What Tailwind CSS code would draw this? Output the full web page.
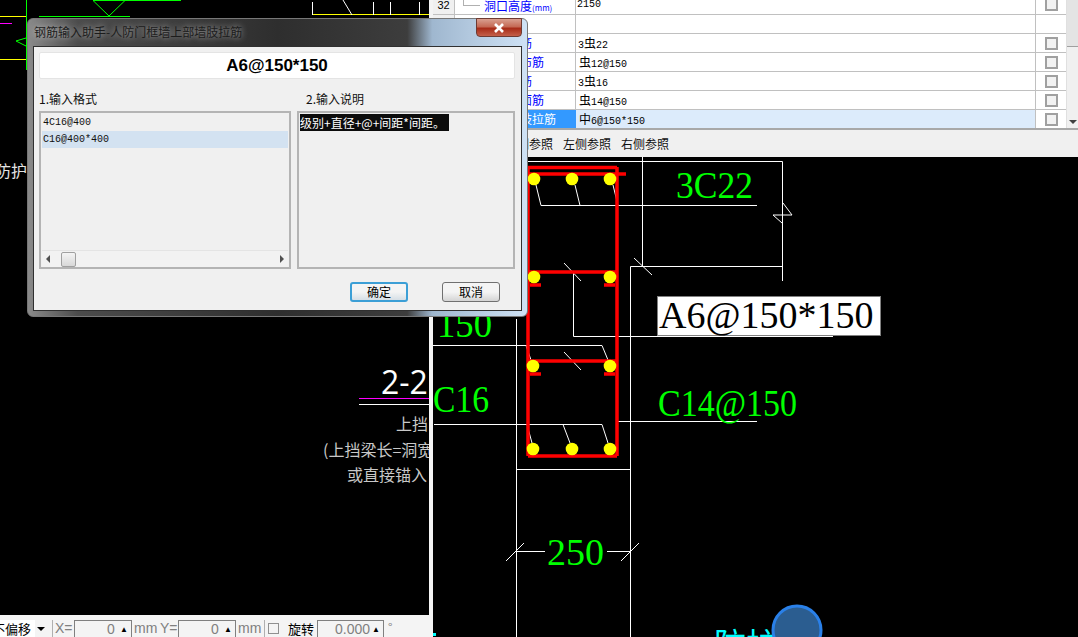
<!DOCTYPE html>
<html lang="zh">
<head>
  <meta charset="UTF-8" />
  <title>钢筋输入助手</title>
  <script src="https://cdn.jsdelivr.net/npm/@tailwindcss/browser@4"></script>
</head>
<body class="bg-black">
<div class="relative w-[1078px] h-[637px] overflow-hidden flex bg-[#f4f4f4] font-['Noto_Sans_CJK_SC','Liberation_Sans',sans-serif]">

  <!-- left drawing + bottom toolbar -->
  <div class="w-[429px] flex flex-col shrink-0">
    <svg class="flex-1 block bg-black" width="429" height="615" viewBox="0 0 429 615" fill="none">
      <g stroke="#00ff00">
        <path d="M93 .5H181M93 .5L109 16L125 .5M39 16.5H130M26.5 0V70M26 38L16 41L26 46" />
      </g>
      <g stroke="#ffff00">
        <path d="M0 16.5H26M0 59.5H26M312 14.5H429" />
      </g>
      <path d="M0 23.5H12" stroke="#ff00ff" />
      <path d="M312.5 2V15M373.5 2V15M390.5 2V15M419.5 2V15M343 0L352 15" stroke="#fff" />
      <path d="M359 398.5H429" stroke="#ff00ff" />
      <path d="M359 404.5H429" stroke="#fff" />
      <text x="-5" y="177" class="fill-[#e4e4e4] text-[16px]">防护</text>
      <text x="381" y="394" class="fill-white text-[32px] font-['Open_Sans']">2-2</text>
      <text x="396" y="430" class="fill-[#c8c8c8] text-[16px]">上挡</text>
      <text x="323" y="456" class="fill-[#c8c8c8] text-[16px]">(上挡梁长=洞宽</text>
      <text x="347" y="481" class="fill-[#c8c8c8] text-[16px]">或直接锚入</text>
    </svg>
    <div class="h-[22px] flex items-start pt-[5px] text-[13px] text-[#808080] bg-[#f4f4f4]">
      <div class="w-[35px] h-[17px] bg-white text-black leading-[17px] overflow-hidden whitespace-nowrap pl-[4px] -indent-[12px]">不偏移</div>
      <span class="ml-[2px] mt-[7px] w-0 h-0 border-x-[4px] border-x-transparent border-t-[4px] border-t-black"></span>
      <span class="ml-[7px] w-px h-[17px] bg-[#b0b0b0]"></span>
      <span class="ml-[2px] w-[19px] leading-[17px] font-['Liberation_Sans'] text-[14px]">X=</span>
      <div class="w-[58px] h-[20px] border border-[#808080] flex justify-between font-['Liberation_Sans'] text-[14px] leading-[17px] pl-[32px] pr-[3px]"><span>0</span><span class="text-black text-[8px]">▲</span></div>
      <span class="ml-[2px] w-[26px] font-['Liberation_Sans'] text-[14px] leading-[17px]">mm</span>
      <span class="w-[18px] font-['Liberation_Sans'] text-[14px] leading-[17px]">Y=</span>
      <div class="w-[58px] h-[20px] border border-[#808080] flex justify-between font-['Liberation_Sans'] text-[14px] leading-[17px] pl-[32px] pr-[3px]"><span>0</span><span class="text-black text-[8px]">▲</span></div>
      <span class="ml-[2px] w-[26px] font-['Liberation_Sans'] text-[14px] leading-[17px]">mm</span>
      <span class="w-px h-[17px] bg-[#b0b0b0]"></span>
      <span class="ml-[3px] mt-[3px] w-[11px] h-[11px] border border-[#909090]"></span>
      <span class="ml-[9px] w-[28px] text-black leading-[17px]">旋转</span>
      <div class="ml-[1px] w-[67px] h-[20px] border border-[#808080] flex justify-between font-['Liberation_Sans'] text-[14px] leading-[17px] pl-[17px] pr-[3px]"><span>0.000</span><span class="text-black text-[8px]">▲</span></div>
      <span class="ml-[4px] text-[12px] leading-[14px]">°</span>
    </div>
  </div>

  <!-- right pane -->
  <div class="ml-[4px] w-[645px] flex flex-col">
    <div class="h-[130px] bg-white flex border-b-2 border-[#a8a8a8] overflow-hidden">
      <div class="w-[633px] text-[10px] font-['Liberation_Mono','Noto_Sans_CJK_SC',monospace] text-black">
        <!-- row 32 -->
        <div class="h-[15px] flex border-b border-[#c0c0c0]">
          <div class="w-[22px] bg-[#f0f0f0] border-r border-[#c0c0c0] text-center text-[11px] font-['Liberation_Sans'] leading-[10px]">32</div>
          <div class="w-[121px] border-r border-[#c0c0c0] relative pl-[29px] text-[12px] leading-[11px] text-[#0000ff] font-['Noto_Sans_CJK_SC'] whitespace-nowrap">
            <span class="absolute left-[8px] top-0 w-[17px] h-[6px] border-l border-b border-[#b0b0b0]"></span>洞口高度<span class="text-[8px]">(mm)</span>
          </div>
          <div class="w-[460px] border-r border-[#c0c0c0] pl-[1px] leading-[10px]">2150</div>
          <div class="w-[30px] flex justify-center"><span class="w-[13px] h-[11px] border-2 border-t-0 border-[#a0a0a0] bg-[#f2f2f2]"></span></div>
        </div>
        <div class="h-[19px] flex border-b border-[#c0c0c0]">
          <div class="w-[22px] bg-[#f0f0f0] border-r border-[#c0c0c0]"></div>
          <div class="w-[121px] border-r border-[#c0c0c0]"></div>
          <div class="w-[460px] border-r border-[#c0c0c0]"></div>
          <div class="w-[30px]"></div>
        </div>
        <div class="h-[19px] flex border-b border-[#c0c0c0] leading-[17px]">
          <div class="w-[22px] bg-[#f0f0f0] border-r border-[#c0c0c0]"></div>
          <div class="w-[121px] border-r border-[#c0c0c0] pl-[29px] text-[12px] text-[#0000ff] font-['Noto_Sans_CJK_SC']">下部纵筋</div>
          <div class="w-[460px] border-r border-[#c0c0c0] pl-[2px]">3<span class="font-['Noto_Sans_CJK_SC'] text-[12px]">虫</span>22</div>
          <div class="w-[30px] flex justify-center items-center"><span class="w-[13px] h-[13px] border-2 border-[#a0a0a0] bg-[#f2f2f2]"></span></div>
        </div>
        <div class="h-[19px] flex border-b border-[#c0c0c0] leading-[17px]">
          <div class="w-[22px] bg-[#f0f0f0] border-r border-[#c0c0c0]"></div>
          <div class="w-[121px] border-r border-[#c0c0c0] pl-[29px] text-[12px] text-[#0000ff] font-['Noto_Sans_CJK_SC']">水平分布筋</div>
          <div class="w-[460px] border-r border-[#c0c0c0] pl-[3px]"><span class="font-['Noto_Sans_CJK_SC'] text-[12px]">虫</span>12@150</div>
          <div class="w-[30px] flex justify-center items-center"><span class="w-[13px] h-[13px] border-2 border-[#a0a0a0] bg-[#f2f2f2]"></span></div>
        </div>
        <div class="h-[19px] flex border-b border-[#c0c0c0] leading-[17px]">
          <div class="w-[22px] bg-[#f0f0f0] border-r border-[#c0c0c0]"></div>
          <div class="w-[121px] border-r border-[#c0c0c0] pl-[29px] text-[12px] text-[#0000ff] font-['Noto_Sans_CJK_SC']">上部纵筋</div>
          <div class="w-[460px] border-r border-[#c0c0c0] pl-[2px]">3<span class="font-['Noto_Sans_CJK_SC'] text-[12px]">虫</span>16</div>
          <div class="w-[30px] flex justify-center items-center"><span class="w-[13px] h-[13px] border-2 border-[#a0a0a0] bg-[#f2f2f2]"></span></div>
        </div>
        <div class="h-[19px] flex border-b border-[#c0c0c0] leading-[17px]">
          <div class="w-[22px] bg-[#f0f0f0] border-r border-[#c0c0c0]"></div>
          <div class="w-[121px] border-r border-[#c0c0c0] pl-[29px] text-[12px] text-[#0000ff] font-['Noto_Sans_CJK_SC']">上部墙面筋</div>
          <div class="w-[460px] border-r border-[#c0c0c0] pl-[3px]"><span class="font-['Noto_Sans_CJK_SC'] text-[12px]">虫</span>14@150</div>
          <div class="w-[30px] flex justify-center items-center"><span class="w-[13px] h-[13px] border-2 border-[#a0a0a0] bg-[#f2f2f2]"></span></div>
        </div>
        <div class="h-[19px] flex border-b border-[#c0c0c0] leading-[17px]">
          <div class="w-[22px] bg-[#f0f0f0] border-r border-[#c0c0c0]"></div>
          <div class="w-[121px] bg-[#3399ff] pl-[29px] text-[12px] text-white font-['Noto_Sans_CJK_SC']">上部墙肢拉筋</div>
          <div class="w-[460px] bg-[#dcebfb] border-r border-[#c0c0c0] pl-[3px]"><span class="font-['Noto_Sans_CJK_SC'] text-[12px]">中</span>6@150*150</div>
          <div class="w-[30px] flex justify-center items-center"><span class="w-[13px] h-[13px] border-2 border-[#a0a0a0] bg-[#f2f2f2]"></span></div>
        </div>
      </div>
      <div class="w-[12px] bg-[#f0f0f0] flex flex-col justify-between items-center border-l border-[#e0e0e0]">
        <div class="w-full h-[47px] bg-[#e4e4e4] border-b border-[#a0a0a0]"></div>
        <span class="mb-[4px] w-0 h-0 border-x-[4px] border-x-transparent border-t-[4px] border-t-[#404040]"></span>
      </div>
    </div>
    <div class="h-[27px] bg-[#f0f0f0] flex items-center gap-[10px] pl-[72px] text-[12px] text-[#111]">
      <span>后侧参照</span><span>左侧参照</span><span>右侧参照</span>
    </div>
    <svg class="flex-1 block bg-black" width="645" height="480" viewBox="433 157 645 480" fill="none">
      <g stroke="#fff">
        <path d="M433 161.5H782.5V281M642.5 157V266.5M630.5 637V266.5H782.5M634 258L652 275M773 215H792L783 203M773 215L782 223" />
        <path d="M541 205.5H757M536 185L541 205.5M575 185L580 205.5M613 185L618 205.5" />
        <path d="M573.5 272V336.5M573.5 336.5H833M564 263L581 281M564 352L581 370" />
        <path d="M433 345.5H602L608 360M526 345.5L531 360M434 424.5H602L608 443M527 424.5L532 443M563 424.5L570 443M617 421.5H757" />
        <path d="M516.5 319V637M516 469.5H630M515 551.5H545M607 551.5H630M506 561L524 543M621 561L639 543" />
      </g>
      <path d="M528 167.5H617M528 174H626M617 167V456M528 167V456M528 456H617M528 272H617M528 361H617M530 285H541M604 285H615M530 374H541M604 374H615" stroke="#ff0000" stroke-width="3.5" />
      <g fill="#ffff00">
        <circle cx="534" cy="179" r="6.3" /><circle cx="572" cy="179" r="6.3" /><circle cx="610" cy="179" r="6.3" />
        <circle cx="534" cy="277" r="6.3" /><circle cx="610" cy="277" r="6.3" />
        <circle cx="533" cy="366" r="6.3" /><circle cx="610" cy="366" r="6.3" />
        <circle cx="533" cy="449" r="6.3" /><circle cx="572" cy="449" r="6.3" /><circle cx="610" cy="449" r="6.3" />
      </g>
      <g class="fill-[#00ff00] text-[38px] font-['Liberation_Serif']">
        <text x="676" y="198" textLength="77" lengthAdjust="spacingAndGlyphs">3C22</text>
        <text x="437" y="337" textLength="55" lengthAdjust="spacingAndGlyphs">150</text>
        <text x="433" y="412" textLength="56" lengthAdjust="spacingAndGlyphs">C16</text>
        <text x="658" y="416" textLength="139" lengthAdjust="spacingAndGlyphs">C14@150</text>
        <text x="547" y="565">250</text>
      </g>
      <text x="714" y="656" class="fill-[#00ffff] text-[32px]">防护</text>
      <rect x="433" y="633" width="3" height="3" fill="#00ffff" />
      <circle cx="797" cy="630" r="24" fill="#2b5d90" stroke="#2a80e8" stroke-width="3" />
    </svg>
  </div>

  <!-- white callout over the drawing -->
  <div class="absolute left-[657px] top-[296px] w-[224px] h-[40px] bg-white border border-[#808080] font-['Liberation_Serif'] text-[38px] leading-[36px] pl-[1px] text-black whitespace-nowrap">A6@150*150</div>

  <!-- dialog -->
  <div class="absolute left-[27px] top-[18px] w-[501px] h-[299px] rounded-[6px] border border-[#777] pt-[27px] px-[5px] pb-[5px] bg-[linear-gradient(90deg,#8a8a8a_0%,#4c4c4c_10%,#2e2e2e_50%,#3d3d3d_76%,#9fb7cf_81%,#cfe2f5_100%)]">
    <div class="absolute left-[6px] top-[6px] text-[12px] leading-[14px] text-[#1c1c1c] [text-shadow:0_0_6px_#ffffffaa] whitespace-nowrap">钢筋输入助手-人防门框墙上部墙肢拉筋</div>
    <div class="absolute right-[5px] -top-px w-[46px] h-[19px] rounded-b-[4px] border border-[#6e3a32] bg-[linear-gradient(180deg,#d9a090_0%,#c56a55_45%,#a82c18_55%,#c4604a_100%)] flex items-center justify-center">
      <svg width="12" height="10" viewBox="0 0 12 10"><path d="M2 1L10 9M10 1L2 9" stroke="#fff" stroke-width="2.6" /></svg>
    </div>
    <div class="w-[489px] h-[265px] bg-[#f0f0f0] border border-[#303030] pt-[5px] pl-[5px] pr-[6px] flex flex-col">
      <div class="h-[27px] bg-white rounded-[2px] border border-[#e4e4e4] text-center text-[17px] font-bold font-['Liberation_Sans'] leading-[25px] text-black">A6@150*150</div>
      <div class="mt-[11px] h-[17px] flex text-[12px] leading-[17px] text-[#111]">
        <span class="w-[267px]">1.输入格式</span>
        <span>2.输入说明</span>
      </div>
      <div class="mt-[4px] h-[158px] flex gap-[6px]">
        <div class="w-[252px] border-2 border-[#b4b4b4] flex flex-col font-['Liberation_Mono'] text-[10px] text-[#111] px-px pt-[1px]">
          <div class="h-[17px] leading-[17px] pl-[1px]">4C16@400</div>
          <div class="h-[17px] leading-[17px] pl-[1px] bg-[#d3e2f1]">C16@400*400</div>
          <div class="mt-auto h-[17px] bg-[#f2f2f2] border-t border-[#e4e4e4] flex items-center justify-between px-[4px]">
            <span class="flex items-center gap-[6px]">
              <span class="w-0 h-0 border-y-[4px] border-y-transparent border-r-[4px] border-r-[#505050]"></span>
              <span class="ml-[5px] w-[15px] h-[15px] rounded-[2px] border border-[#a0a0a0] bg-[linear-gradient(180deg,#f4f4f4,#d8d8d8)]"></span>
            </span>
            <span class="w-0 h-0 border-y-[4px] border-y-transparent border-l-[4px] border-l-[#505050]"></span>
          </div>
        </div>
        <div class="w-[218px] border-2 border-[#b4b4b4] pt-[1px] pl-[1px]">
          <div class="w-[149px] h-[17px] bg-[#0c0c0c] text-white text-[12px] leading-[17px] whitespace-nowrap">级别+直径+@+间距*间距。</div>
        </div>
      </div>
      <div class="mt-[13px] flex justify-end gap-[34px] pr-[15px]">
        <div class="w-[58px] h-[20px] rounded-[3px] border-2 border-[#3c9fd6] bg-[linear-gradient(180deg,#f4f4f4_50%,#d6dfe6)] text-center text-[12px] leading-[16px] text-black">确定</div>
        <div class="w-[58px] h-[20px] rounded-[3px] border border-[#707070] bg-[linear-gradient(180deg,#f4f4f4_50%,#d4d4d4)] text-center text-[12px] leading-[18px] text-black">取消</div>
      </div>
    </div>
  </div>
</div>
</body>
</html>
